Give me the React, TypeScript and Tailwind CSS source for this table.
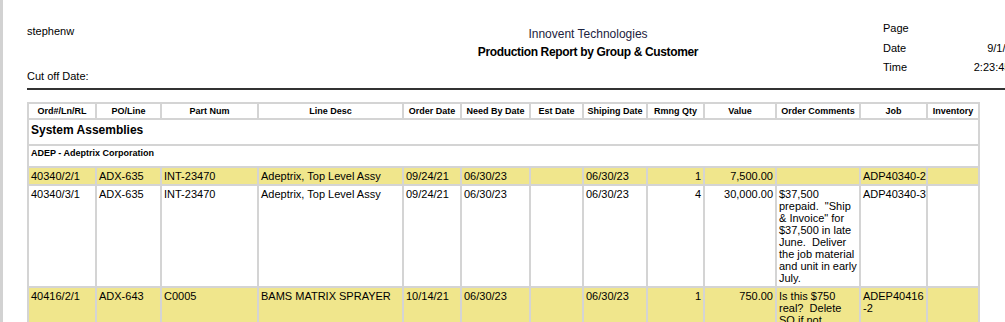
const COLS = [
    { label: "Ord#/Ln/RL", w: 68 },
    { label: "PO/Line", w: 65 },
    { label: "Part Num", w: 97 },
    { label: "Line Desc", w: 145 },
    { label: "Order Date", w: 58 },
    { label: "Need By Date", w: 69 },
    { label: "Est Date", w: 53 },
    { label: "Shiping Date", w: 64 },
    { label: "Rmng Qty", w: 57 },
    { label: "Value", w: 72 },
    { label: "Order Comments", w: 84 },
    { label: "Job", w: 67 },
    { label: "Inventory", w: 52 },
];

type Line = {
    ord: string;
    po: string;
    part: string;
    desc: string;
    orderDate: string;
    needBy: string;
    ship: string;
    qty: string;
    value: string;
    comments: string;
    job: React.ReactNode;
    shaded: boolean;
};

const LINES: Line[] = [
    {
        ord: "40340/2/1",
        po: "ADX-635",
        part: "INT-23470",
        desc: "Adeptrix, Top Level Assy",
        orderDate: "09/24/21",
        needBy: "06/30/23",
        ship: "06/30/23",
        qty: "1",
        value: "7,500.00",
        comments: "",
        job: "ADP40340-2",
        shaded: true,
    },
    {
        ord: "40340/3/1",
        po: "ADX-635",
        part: "INT-23470",
        desc: "Adeptrix, Top Level Assy",
        orderDate: "09/24/21",
        needBy: "06/30/23",
        ship: "06/30/23",
        qty: "4",
        value: "30,000.00",
        comments: "$37,500 prepaid.  \"Ship & Invoice\" for $37,500 in late June.  Deliver the job material and unit in early July.",
        job: "ADP40340-3",
        shaded: false,
    },
    {
        ord: "40416/2/1",
        po: "ADX-643",
        part: "C0005",
        desc: "BAMS MATRIX SPRAYER",
        orderDate: "10/14/21",
        needBy: "06/30/23",
        ship: "06/30/23",
        qty: "1",
        value: "750.00",
        comments: "Is this $750 real?  Delete SO if not needed.",
        job: (
            <>
                ADEP40416
                <br />
                -2
            </>
        ),
        shaded: true,
    },
];

const td = "border-2 border-[#d4d4d4] px-[2px] py-[2px] align-top";

export default function App() {
    return (
        <div className="w-[1005px] h-[322px] overflow-hidden bg-white flex text-black font-['Liberation_Sans',Arial,sans-serif]">
            {/* viewer edge */}
            <div className="w-[3px] shrink-0 bg-[#d2d2d2]" />

            <div className="pl-[24px] shrink-0">
                {/* Report header */}
                <div className="flex w-[1010px] h-[90px] border-b-2 border-[#333]">
                    <div className="w-[376px] shrink-0 flex flex-col justify-between pt-[25px] pb-[5px] text-[11px] leading-[13px]">
                        <div>stephenw</div>
                        <div>Cut off Date:</div>
                    </div>
                    <div className="w-[370px] shrink-0 pt-[27px] text-center leading-[14px]">
                        <div className="text-[12px] text-[#1c2240]">Innovent Technologies</div>
                        <div className="mt-[4px] text-[12px] font-bold tracking-[-0.35px]">
                            Production Report by Group &amp; Customer
                        </div>
                    </div>
                    <div className="w-[110px] shrink-0" />
                    <div className="flex pt-[19px] text-[11px] leading-[19.5px]">
                        <div className="w-[40px]">
                            <div>Page</div>
                            <div>Date</div>
                            <div>Time</div>
                        </div>
                        <div className="w-[107px] text-right">
                            <div>&nbsp;</div>
                            <div>9/1/2023</div>
                            <div>2:23:45 PM</div>
                        </div>
                    </div>
                </div>

                {/* Detail table */}
                <table className="mt-[12px] w-[951px] table-fixed border-collapse border-2 border-[#d4d4d4] text-[11px] leading-[12px]">
                    <colgroup>
                        {COLS.map(c => (
                            <col key={c.label} style={{ width: c.w }} />
                        ))}
                    </colgroup>
                    <thead>
                        <tr>
                            {COLS.map(c => (
                                <th
                                    key={c.label}
                                    className="border-2 border-[#d4d4d4] px-[1px] py-[1px] text-center text-[9px] leading-[12px] font-bold whitespace-nowrap"
                                >
                                    {c.label}
                                </th>
                            ))}
                        </tr>
                    </thead>
                    <tbody>
                        <tr>
                            <td colSpan={13} className="border-2 border-[#d4d4d4] px-[2px] pt-[2px] pb-[6px] text-[12px] leading-[16px] font-bold">
                                System Assemblies
                            </td>
                        </tr>
                        <tr>
                            <td colSpan={13} className="border-2 border-[#d4d4d4] px-[2px] pt-[1px] pb-[7px] text-[9px] leading-[12px] font-bold">
                                ADEP - Adeptrix Corporation
                            </td>
                        </tr>
                        {LINES.map(l => (
                            <tr key={l.ord} className={l.shaded ? "bg-[#f0e68c]" : "bg-white"}>
                                <td className={td}>{l.ord}</td>
                                <td className={td}>{l.po}</td>
                                <td className={td}>{l.part}</td>
                                <td className={td}>{l.desc}</td>
                                <td className={td}>{l.orderDate}</td>
                                <td className={td}>{l.needBy}</td>
                                <td className={td}></td>
                                <td className={td}>{l.ship}</td>
                                <td className={`${td} text-right`}>{l.qty}</td>
                                <td className={`${td} text-right`}>{l.value}</td>
                                <td className={`${td} whitespace-pre-wrap`}>{l.comments}</td>
                                <td className={`${td} whitespace-nowrap overflow-hidden`}>{l.job}</td>
                                <td className={td}></td>
                            </tr>
                        ))}
                    </tbody>
                </table>
            </div>
        </div>
    );
}
